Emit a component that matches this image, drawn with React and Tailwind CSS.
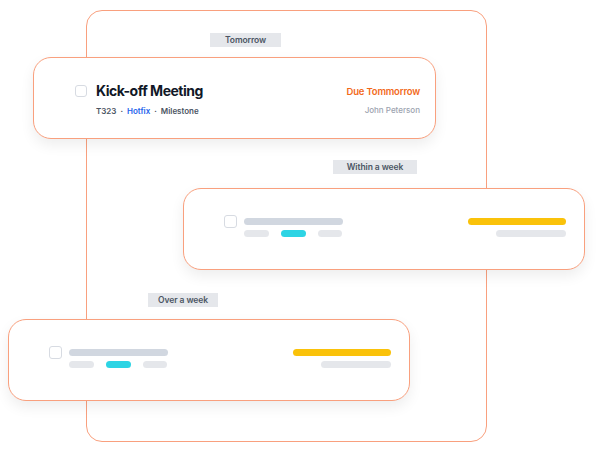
import React from 'react';

/**
 * Placeholder task card (skeleton bars)
 */
function SkeletonCard({ className }) {
  return (
    <div className={`w-[402px] h-[82px] bg-white rounded-[18px] border border-[#f9a07e] shadow-[0_6px_14px_rgba(0,0,0,0.07)] flex justify-between pl-[40px] pr-[18px] pt-[26px] ${className}`}>
      <div className="flex gap-[7px]">
        <div className="w-[13px] h-[13px] rounded-[3px] border-[1.5px] border-[#d7dbe2] bg-white" />
        <div className="flex flex-col gap-[5px] pt-[3px]">
          <div className="w-[99px] h-[7px] rounded-full bg-[#d1d7e0]" />
          <div className="flex gap-[12px]">
            <div className="w-[25px] h-[7px] rounded-full bg-[#e5e7eb]" />
            <div className="w-[25px] h-[7px] rounded-full bg-[#2dd4e4]" />
            <div className="w-[24px] h-[7px] rounded-full bg-[#e5e7eb]" />
          </div>
        </div>
      </div>
      <div className="flex flex-col items-end gap-[5px] pt-[3px]">
        <div className="w-[98px] h-[7px] rounded-full bg-[#fac20a]" />
        <div className="w-[70px] h-[7px] rounded-full bg-[#e5e7eb]" />
      </div>
    </div>
  );
}

/**
 * Group label chip
 */
function GroupLabel({ children, className }) {
  return (
    <div className={`h-[14px] bg-[#e5e7eb] text-[#4b5563] text-[8.5px] font-semibold flex items-center justify-center tracking-[-0.01em] ${className}`}>
      {children}
    </div>
  );
}

export default function App() {
  return (
    <div className="relative w-[600px] h-[455px] bg-white overflow-hidden font-['Inter','Liberation_Sans',sans-serif]">
      {/* Background frame */}
      <div className="absolute left-[86px] top-[10px] w-[401px] h-[432px] rounded-[16px] border border-[#f9a07e]" />

      <div className="relative flex flex-col items-start pt-[33px]">
        <GroupLabel className="ml-[210px] w-[71px]">Tomorrow</GroupLabel>

        {/* Main task card */}
        <div className="mt-[10px] ml-[33px] w-[403px] h-[82px] bg-white rounded-[18px] border border-[#f9a07e] shadow-[0_6px_14px_rgba(0,0,0,0.07)] flex justify-between pl-[41px] pr-[15px] pt-[24px]">
          <div className="flex gap-[9px]">
            <div className="mt-[3px] w-[12px] h-[12px] rounded-[3px] border-[1.5px] border-[#d7dbe2]" />
            <div className="flex flex-col">
              <div className="text-[14px] leading-[18px] font-bold text-[#111827] tracking-[-0.035em]">Kick-off Meeting</div>
              <div className="mt-[5px] text-[8px] font-semibold text-[#4b5563] flex items-center gap-[4px]">
                <span>T323</span>
                <span>·</span>
                <span className="text-[#2563eb]">Hotfix</span>
                <span>·</span>
                <span>Milestone</span>
              </div>
            </div>
          </div>
          <div className="flex flex-col items-end pt-[3px]">
            <div className="text-[9.5px] font-semibold text-[#f26a1b] tracking-[-0.02em]">Due Tommorrow</div>
            <div className="mt-[5px] text-[8px] font-medium text-[#9ca3af]">John Peterson</div>
          </div>
        </div>

        <GroupLabel className="mt-[21px] ml-[333px] w-[84px]">Within a week</GroupLabel>
        <SkeletonCard className="mt-[14px] ml-[183px]" />

        <GroupLabel className="mt-[23px] ml-[148px] w-[70px]">Over a week</GroupLabel>
        <SkeletonCard className="mt-[12px] ml-[8px]" />
      </div>
    </div>
  );
}
